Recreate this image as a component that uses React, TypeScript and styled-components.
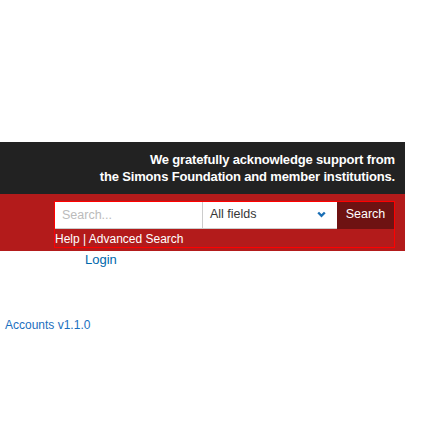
import styled, { createGlobalStyle } from 'styled-components';

const GlobalStyle = createGlobalStyle`
  body {
    margin: 0;
    background: #ffffff;
    font-family: "Liberation Sans", Arial, sans-serif;
  }
`;

const Page = styled.div`
  width: 448px;
  padding-top: 142px;
`;

const Header = styled.header`
  width: 405px;
`;

const Banner = styled.div`
  background-color: #222222;
  color: #ffffff;
  font-size: 13px;
  letter-spacing: -0.16px;
  font-weight: bold;
  line-height: 17px;
  text-align: right;
  padding: 9px 10px 8px 0;
  height: 52px;
  box-sizing: border-box;
`;

const SearchBar = styled.div`
  background-color: #b31b1b;
  height: 57px;
  padding: 7px 10px 0 54px;
  box-sizing: border-box;
`;

const SearchForm = styled.form`
  border: 1px solid #ff0000;
  width: 341px;
  height: 47px;
  box-sizing: border-box;
  margin: 0;
`;

const Fields = styled.div`
  display: flex;
  height: 27px;
`;

const SearchInput = styled.input`
  width: 148px;
  height: 27px;
  box-sizing: border-box;
  border: none;
  border-right: 1px solid #cccccc;
  border-bottom: 1px solid #cccccc;
  padding: 0 7px;
  font-family: "Liberation Sans", Arial, sans-serif;
  font-size: 12.5px;
  color: #333;
  outline: none;

  &::placeholder {
    color: #bbbbbb;
  }
`;

const SelectBox = styled.div`
  width: 134px;
  height: 27px;
  box-sizing: border-box;
  background: #ffffff;
  border-bottom: 1px solid #cccccc;
  display: flex;
  align-items: center;
  justify-content: space-between;
  padding: 0 11px 2px 7px;
  font-size: 12.5px;
  color: #363636;
`;

const SearchButton = styled.button`
  flex: 1;
  height: 27px;
  border: none;
  background-color: #6e1212;
  color: #ffffff;
  font-family: "Liberation Sans", Arial, sans-serif;
  font-size: 12.5px;
  padding: 0 0 3px;
`;

const HelpLinks = styled.div`
  color: #ffffff;
  font-size: 12px;
  line-height: 14px;
  padding: 3px 0 0 0;
`;

const LoginLink = styled.a`
  display: block;
  color: #0068ac;
  font-size: 13px;
  text-decoration: none;
  padding: 2px 0 0 85px;
  line-height: 14px;
`;

const Footer = styled.div`
  color: #1a6fc0;
  font-size: 12px;
  line-height: 14px;
  padding: 51px 0 0 5px;
`;

function Chevron() {
  return (
    <svg width="9" height="7" viewBox="0 0 9 7">
      <path d="M1.2 1.5 L4.5 4.8 L7.8 1.5" fill="none" stroke="#1a6fb5" strokeWidth="2.4" />
    </svg>
  );
}

export default function App() {
  return (
    <Page>
      <GlobalStyle />
      <Header>
        <Banner>
          We gratefully acknowledge support from
          <br />
          the Simons Foundation and member institutions.
        </Banner>
        <SearchBar>
          <SearchForm onSubmit={(e) => e.preventDefault()}>
            <Fields>
              <SearchInput placeholder="Search..." />
              <SelectBox>
                <span>All fields</span>
                <Chevron />
              </SelectBox>
              <SearchButton type="submit">Search</SearchButton>
            </Fields>
            <HelpLinks>Help | Advanced Search</HelpLinks>
          </SearchForm>
        </SearchBar>
      </Header>
      <LoginLink href="#">Login</LoginLink>
      <Footer>Accounts v1.1.0</Footer>
    </Page>
  );
}
